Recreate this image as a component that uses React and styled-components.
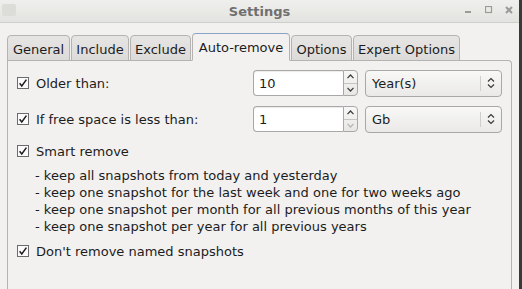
import React from 'react'
import styled, { createGlobalStyle } from 'styled-components'

const Global = createGlobalStyle`
  html, body { margin: 0; padding: 0; background: #f2f1f0; }
  body { font-family: "DejaVu Sans", sans-serif; font-size: 13px; color: #1c1c1c; }
`

const Window = styled.div`
  width: 522px;
  height: 289px;
  overflow: hidden;
  display: flex;
  flex-direction: column;
  background: #f2f1f0;
  box-sizing: border-box;
  border-right: 3px solid #3a3a38;
`

const TitleBar = styled.div`
  height: 22px;
  flex: none;
  display: flex;
  align-items: center;
  position: relative;
  background: linear-gradient(#efefed, #e3e3e0);
  border-bottom: 1px solid #cfcfcc;
  .title {
    flex: 1;
    text-align: center;
    font-weight: bold;
    color: #707070;
    font-size: 13px;
  }
`

const AppIcon = styled.div`
  position: absolute;
  left: 2px;
  top: 4px;
  width: 14px;
  height: 12px;
  border-radius: 2px;
  background: #dcdcd9;
`

const WinButtons = styled.div`
  position: absolute;
  right: 6px;
  top: 6px;
  display: flex;
  gap: 12px;
  align-items: center;
`

const Body = styled.div`
  flex: 1;
  padding: 10px 7px 0 7px;
  display: flex;
  flex-direction: column;
`

const TabBar = styled.div`
  display: flex;
  align-items: flex-end;
  height: 28px;
  gap: 1px;
  margin-bottom: -1px;
  position: relative;
  z-index: 1;
`

const Tab = styled.div`
  box-sizing: border-box;
  height: ${p => (p.$active ? 28 : 26)}px;
  padding: 0 5px;
  display: flex;
  align-items: center;
  justify-content: center;
  width: ${p => p.$w}px;
  border: 1px solid #b4b3b1;
  border-bottom: ${p => (p.$active ? '1px solid #f2f1f0' : '1px solid #b4b3b1')};
  border-top: ${p => (p.$active ? '1px solid #8aa4c6' : '1px solid #b4b3b1')};
  border-radius: 4px 4px 0 0;
  background: ${p => (p.$active ? '#f2f1f0' : 'linear-gradient(#e6e5e3, #dcdbd9)')};
  color: #1c1c1c;
  white-space: nowrap;
  padding-top: ${p => (p.$active ? 0 : 2)}px;
`

const Pane = styled.div`
  flex: 1;
  border: 1px solid #b4b3b1;
  border-bottom: none;
  border-radius: 0 4px 0 0;
  background: #f2f1f0;
  padding: 9px 8px 0 9px;
  display: flex;
  flex-direction: column;
`

const Row = styled.div`
  display: flex;
  align-items: center;
  height: ${p => p.$h || 26}px;
  margin-bottom: ${p => p.$mb || 0}px;
`

const Label = styled.label`
  display: flex;
  align-items: center;
  gap: 7px;
  width: ${p => (p.$w ? `${p.$w}px` : 'auto')};
  flex: none;
`

const Box = styled.span`
  width: 12px;
  height: 12px;
  display: inline-flex;
  flex: none;
`

const SpinWrap = styled.div`
  display: flex;
  align-items: stretch;
  height: 26px;
  margin-right: 7px;
`

const SpinField = styled.div`
  box-sizing: border-box;
  width: 90px;
  border: 1px solid #a9a8a6;
  border-right: none;
  border-radius: 4px 0 0 4px;
  background: #fff;
  padding-left: 5px;
  display: flex;
  align-items: center;
  box-shadow: inset 0 1px 1px rgba(0,0,0,0.08);
`

const SpinArrows = styled.div`
  box-sizing: border-box;
  width: 15px;
  display: flex;
  flex-direction: column;
  border: 1px solid #a9a8a6;
  border-radius: 0 4px 4px 0;
  background: linear-gradient(#f7f7f6, #e8e7e5);
  > div {
    flex: 1;
    display: flex;
    align-items: center;
    justify-content: center;
  }
  > div + div { border-top: 1px solid #c5c4c2; }
`

const Combo = styled.div`
  box-sizing: border-box;
  width: 137px;
  height: 27px;
  border: 1px solid #a9a8a6;
  border-radius: 4px;
  background: linear-gradient(#f8f8f7, #eae9e7);
  display: flex;
  align-items: center;
  padding-left: 6px;
  .val { flex: 1; }
  .sep {
    width: 1px;
    align-self: stretch;
    margin: 5px 0;
    background: #cfcecc;
  }
  .arr {
    width: 20px;
    display: flex;
    justify-content: center;
  }
`

const Rules = styled.div`
  padding-left: 18px;
  line-height: 17px;
  margin-top: 6px;
  margin-bottom: 6px;
`

const Check = () => (
  <Box>
    <svg width="12" height="12" viewBox="0 0 12 12">
      <rect x="0.5" y="0.5" width="11" height="11" fill="#fbfbfb" stroke="#6b6b6b" />
      <path d="M2.6 6.2 L4.8 9 L9.4 2.6" fill="none" stroke="#1e1e1e" strokeWidth="1.5" />
    </svg>
  </Box>
)

const Chev = ({ up, color = '#3a3a3a' }) => (
  <svg width="7" height="5" viewBox="0 0 7 5">
    <path d={up ? 'M0.5 4.2 L3.5 1 L6.5 4.2' : 'M0.5 0.8 L3.5 4 L6.5 0.8'} fill="none" stroke={color} strokeWidth="1.2" />
  </svg>
)

const UpDown = () => (
  <svg width="8" height="12" viewBox="0 0 8 12">
    <path d="M1 4.5 L4 1.5 L7 4.5 M1 7.5 L4 10.5 L7 7.5" fill="none" stroke="#3a3a3a" strokeWidth="1.2" />
  </svg>
)

const Spin = ({ value, downDisabled }) => (
  <SpinWrap>
    <SpinField>{value}</SpinField>
    <SpinArrows>
      <div><Chev up /></div>
      <div><Chev color={downDisabled ? '#b5b5b5' : '#3a3a3a'} /></div>
    </SpinArrows>
  </SpinWrap>
)

const Select = ({ value }) => (
  <Combo>
    <span className="val">{value}</span>
    <span className="sep" />
    <span className="arr"><UpDown /></span>
  </Combo>
)

const tabs = [
  ['General', 63],
  ['Include', 58],
  ['Exclude', 61],
  ['Auto-remove', 98, true],
  ['Options', 61],
  ['Expert Options', 107],
]

export default function App() {
  return (
    <>
      <Global />
      <Window>
        <TitleBar>
          <AppIcon />
          <span className="title">Settings</span>
          <WinButtons>
            <svg width="8" height="8" viewBox="0 0 8 8"><rect x="0" y="5" width="6" height="2" fill="#9a9a98" /></svg>
            <svg width="8" height="8" viewBox="0 0 8 8"><rect x="0.5" y="0.5" width="6" height="6" fill="none" stroke="#9a9a98" strokeWidth="1.2" /></svg>
            <svg width="8" height="8" viewBox="0 0 8 8"><path d="M1 1 L7 7 M7 1 L1 7" stroke="#9a9a98" strokeWidth="2" /></svg>
          </WinButtons>
        </TitleBar>
        <Body>
          <TabBar>
            {tabs.map(([t, w, a]) => (
              <Tab key={t} $w={w} $active={a}>{t}</Tab>
            ))}
          </TabBar>
          <Pane>
            <Row $mb={10}>
              <Label $w={236}><Check />Older than:</Label>
              <Spin value="10" />
              <Select value="Year(s)" />
            </Row>
            <Row $mb={9}>
              <Label $w={236}><Check />If free space is less than:</Label>
              <Spin value="1" downDisabled />
              <Select value="Gb" />
            </Row>
            <Row $h={20}>
              <Label><Check />Smart remove</Label>
            </Row>
            <Rules>
              <div>- keep all snapshots from today and yesterday</div>
              <div>- keep one snapshot for the last week and one for two weeks ago</div>
              <div>- keep one snapshot per month for all previous months of this year</div>
              <div>- keep one snapshot per year for all previous years</div>
            </Rules>
            <Row $h={20}>
              <Label><Check />Don't remove named snapshots</Label>
            </Row>
          </Pane>
        </Body>
      </Window>
    </>
  )
}
